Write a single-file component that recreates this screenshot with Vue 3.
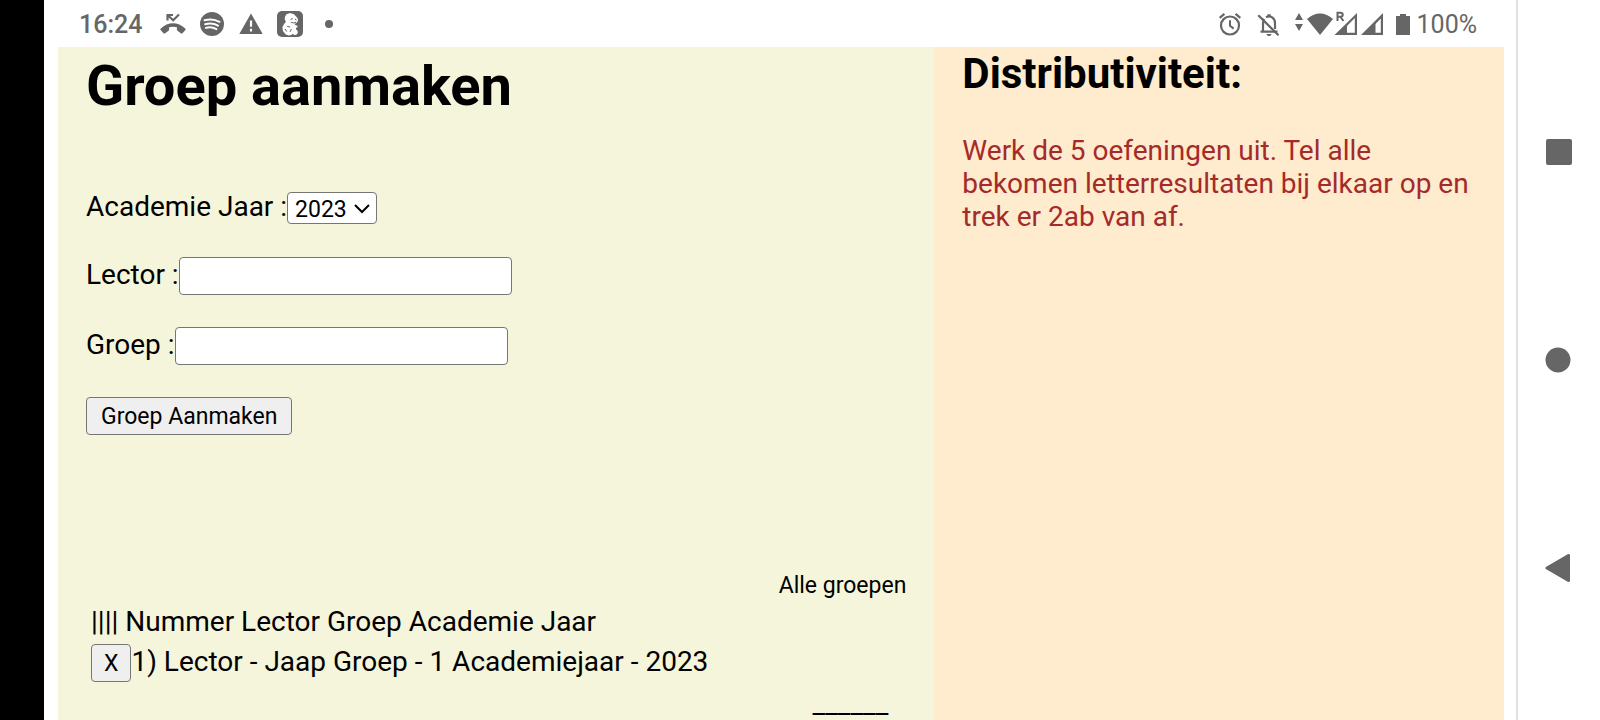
<script setup>
import { ref } from 'vue'

const years = ['2023', '2022', '2021']
const year = ref('2023')
const lector = ref('')
const groep = ref('')
const groups = ref([{ id: 1, lector: 'Jaap', groep: '1', year: '2023' }])

function addGroup() {
  if (!lector.value || !groep.value) return
  groups.value.push({
    id: groups.value.length + 1,
    lector: lector.value,
    groep: groep.value,
    year: year.value
  })
}

function removeGroup(id) {
  groups.value = groups.value.filter((g) => g.id !== id)
}
</script>

<template>
  <div class="device">
    <div class="cutout"></div>

    <div class="screen">
      <header class="status">
        <div class="status-side">
          <span class="clock">16:24</span>
          <div class="notices">
            <svg width="26" height="26" viewBox="0 0 26 26">
              <path d="M.8 17.500C8 10.500 18 10.500 25.200 17.500c.6.600.6 1.200 0 1.800l-2.700 2.900c-.5.500-1.100.5-1.700 0l-3.300-2.400c-.5-.4-.6-.7-.6-1.300v-2.300c-2.600-.7-5.200-.7-7.800 0v2.300c0 .6-.1.900-.6 1.300l-3.300 2.400c-.6.500-1.200.5-1.700 0L.8 19.300c-.6-.6-.6-1.200 0-1.800z" fill="#666" />
              <path d="M7.500 9.500v-5.500H13M8 4.500l5.200 4.800L19 3.500" fill="none" stroke="#666" stroke-width="2.200" />
            </svg>
            <svg width="26" height="26" viewBox="0 0 26 26">
              <circle cx="13" cy="13" r="12" fill="#666" />
              <path d="M5.500 9.300c5-1.500 10.500-1 15 1.500M6.200 13.200c4.300-1.200 8.900-.8 12.800 1.400M6.900 16.900c3.700-1 7.200-.6 10.500 1.200" fill="none" stroke="#fff" stroke-width="2" stroke-linecap="round" />
            </svg>
            <svg width="26" height="26" viewBox="0 0 26 26">
              <path d="M13 2.500L24.700 23H1.300z" fill="#666" />
              <path d="M13 9.500v6.300M13 17.800v2.600" stroke="#fff" stroke-width="2.200" />
            </svg>
            <svg width="26" height="26" viewBox="0 0 26 26">
              <rect width="26" height="26" rx="5" fill="#666" />
              <path d="M9.500 3.200l3.500-1.200 4 1.300 2.800 3 1.200 1.600-.3 2.700-1.700 1.600-1.600.7 1.600 1.700 1.700.2-.3 1.500-1.400.5.300 1.900 1.400 1.300v2.200l-1.400 1.600-2 .1-1.500-1.200-1.400 1.200-2.700.5-3.200-1.200-2.600-3.300-.5-3.600 1.600-3.300 1.900-2-1.200-2.700.4-2.900z" fill="#fff" />
              <path d="M14 8.200l1.500-.4M18.300 8.300l.8.300M14.200 11.300l2.400.7 2.100-.7M10.500 15.500l2.300.4M14.200 18.300l-1 2.300M8.300 18.300l1.200 1.900" fill="none" stroke="#666" stroke-width="1" stroke-linecap="round" />
            </svg>
            <svg width="26" height="26" viewBox="0 0 26 26">
              <circle cx="13" cy="13" r="4" fill="#666" />
            </svg>
          </div>
        </div>

        <div class="status-side">
          <div class="alerts">
            <svg width="24" height="26" viewBox="0 0 24 26">
              <circle cx="12" cy="14.500" r="9" fill="none" stroke="#666" stroke-width="2.200" />
              <path d="M1.700 6.800l4.700-4M22.300 6.800l-4.700-4" stroke="#666" stroke-width="2.200" />
              <path d="M12 9.300v5.500l3.700 2.800" fill="none" stroke="#666" stroke-width="2" />
            </svg>
            <svg width="24" height="26" viewBox="0 0 24 26">
              <path d="M3.500 20.700h17M6 20v-8c0-1.700.5-3 1.300-4M9 6.300c4.500-2.300 9 .7 9 5.700v6" fill="none" stroke="#666" stroke-width="2.200" />
              <path d="M10.400 3.300h3.200v2.400h-3.200zM9.500 23h5c-.3 1.500-1.200 2-2.500 2s-2.200-.5-2.500-2z" fill="#666" />
              <path d="M1.300 4.300l20.200 20" stroke="#666" stroke-width="2.200" />
            </svg>
          </div>
          <div class="network">
            <svg width="90" height="26" viewBox="0 0 90 26">
              <path d="M5 2l4 7H1zM5 20l4-7H1z" fill="#666" />
              <path d="M13 8c7.500-7.500 18.500-7.500 26 0L26 24z" fill="#666" />
              <path d="M43.500 10V1.800h3c3 0 3 4 0 4h-3M46.500 6l3 4" fill="none" stroke="#666" stroke-width="2" />
              <path d="M40.500 24L63 2v22zM53 15v6.800h7.800V7z" fill="#666" fill-rule="evenodd" />
              <path d="M67 24L89 2v22zM81.500 13v8.800h5.300V7.500z" fill="#666" fill-rule="evenodd" />
            </svg>
            <svg width="14" height="26" viewBox="0 0 14 26">
              <path d="M4 3h6v2h4v19H0V5h4z" fill="#666" />
            </svg>
            <span class="battery">100%</span>
          </div>
        </div>
      </header>

      <div class="page">
        <main class="main">
          <h1>Groep aanmaken</h1>

          <form class="form" @submit.prevent="addGroup">
            <div class="row">
              <label for="year">Academie Jaar :</label>
              <div class="picker">
                <select id="year" v-model="year">
                  <option v-for="y in years" :key="y" :value="y">{{ y }}</option>
                </select>
                <svg class="chevron" width="18" height="12" viewBox="0 0 18 12">
                  <path d="M2 2l7 7 7-7" fill="none" stroke="#000" stroke-width="2" />
                </svg>
              </div>
            </div>
            <div class="row">
              <label for="lector">Lector :</label>
              <input id="lector" v-model="lector" type="text" />
            </div>
            <div class="row">
              <label for="groep">Groep :</label>
              <input id="groep" v-model="groep" type="text" />
            </div>
            <button type="submit">Groep Aanmaken</button>
          </form>

          <table>
            <caption>Alle groepen</caption>
            <thead>
              <tr>
                <th>|||| Nummer Lector Groep Academie Jaar</th>
              </tr>
            </thead>
            <tbody>
              <tr v-for="g in groups" :key="g.id">
                <td>
                  <div class="entry">
                    <button type="button" @click="removeGroup(g.id)">X</button>
                    <span>{{ g.id }}) Lector - {{ g.lector }} Groep - {{ g.groep }} Academiejaar - {{ g.year }}</span>
                  </div>
                </td>
              </tr>
            </tbody>
          </table>
          <p class="rule">______</p>
        </main>

        <aside class="aside">
          <h2>Distributiviteit:</h2>
          <p>Werk de 5 oefeningen uit. Tel alle bekomen letterresultaten bij elkaar op en trek er 2ab van af.</p>
        </aside>
      </div>
    </div>

    <nav class="keys">
      <button type="button" aria-label="Overzicht">
        <svg width="28" height="28" viewBox="0 0 28 28"><rect x="1" y="1" width="26" height="26" rx="2" fill="#666" /></svg>
      </button>
      <button type="button" aria-label="Start">
        <svg width="28" height="28" viewBox="0 0 28 28"><circle cx="13" cy="14" r="12.500" fill="#666" /></svg>
      </button>
      <button type="button" aria-label="Terug">
        <svg width="28" height="28" viewBox="0 0 28 28"><path d="M2 14L23.500 1.500v25z" fill="#666" stroke="#666" stroke-width="3" stroke-linejoin="round" /></svg>
      </button>
    </nav>
  </div>
</template>

<style>
body {
  margin: 0;
  overflow: hidden;
}
</style>

<style scoped>
.device {
  display: flex;
  height: 100vh;
  overflow: hidden;
  background: #fff;
  color: #000;
  font-family: Roboto, "Noto Sans", sans-serif;
  font-size: 28px;
  line-height: 33px;
}

svg {
  display: block;
  flex: none;
}

.cutout {
  flex: none;
  width: 44px;
  background: #000;
}

.screen {
  flex: 1;
  min-width: 0;
  display: flex;
  flex-direction: column;
}

.status {
  flex: none;
  display: flex;
  justify-content: space-between;
  height: 47px;
  padding: 0 39px 0 35px;
  box-sizing: border-box;
  color: #666;
  font-size: 25px;
}

.status-side,
.notices,
.alerts,
.network {
  display: flex;
  align-items: center;
}

.status-side {
  gap: 18px;
}

.clock,
.battery {
  padding-top: 2px;
}

.clock {
  font-weight: 500;
}

.notices {
  gap: 13px;
}

.alerts {
  gap: 15px;
}

.status-side:last-child {
  gap: 13px;
}

.network {
  gap: 12px;
}

.battery {
  margin-left: -5px;
}

.page {
  flex: 1;
  min-height: 0;
  display: grid;
  grid-template-columns: minmax(0, 20fr) minmax(0, 13fr);
  margin: 0 12px 0 14px;
}

.main {
  padding: 6px 28px 0;
  background: beige;
}

.aside {
  padding: 2px 28px 0;
  background: blanchedalmond;
}

h1 {
  margin: 0 0 72px;
  font-size: 56px;
  line-height: 66px;
}

h2 {
  margin: 0 0 36px;
  font-size: 42px;
  line-height: 49px;
}

p {
  margin: 0;
}

.aside p {
  color: brown;
}

.form {
  display: flex;
  flex-direction: column;
  align-items: flex-start;
  gap: 32px;
  margin-bottom: 137px;
}

.row,
.entry {
  display: flex;
  align-items: center;
}

.row label,
.entry span {
  padding-bottom: 3px;
}

.row:first-child {
  height: 34px;
}

.picker {
  position: relative;
}

select,
input,
.main button {
  box-sizing: border-box;
  height: 38px;
  margin: 0;
  border: 1px solid #767676;
  border-radius: 4px;
  background: #fff;
  color: #000;
  font-family: inherit;
  font-size: 23px;
  line-height: 27px;
}

select {
  display: block;
  appearance: none;
  width: 90px;
  height: 32px;
  padding: 2px 7px 0;
}

.chevron {
  position: absolute;
  top: 11px;
  right: 6px;
  pointer-events: none;
}

input {
  width: 333px;
  padding: 0 4px;
}

.main button {
  padding: 0 12px;
  background: #efefef;
}

.main .form button {
  padding: 0 14px;
}

table {
  width: 100%;
  border-spacing: 3px;
}

caption {
  font-size: 23px;
  line-height: 28px;
  text-align: right;
}

th,
td {
  padding: 2px;
  font-weight: 400;
  text-align: left;
}

th {
  padding-bottom: 1px;
}

.rule {
  padding-right: 18px;
  text-align: right;
}

.keys {
  flex: none;
  display: flex;
  flex-direction: column;
  align-items: center;
  justify-content: center;
  gap: 180px;
  width: 84px;
  box-sizing: border-box;
  border-left: 2px solid #e0e0e0;
}

.keys button {
  padding: 0;
  border: 0;
  background: none;
}
</style>
